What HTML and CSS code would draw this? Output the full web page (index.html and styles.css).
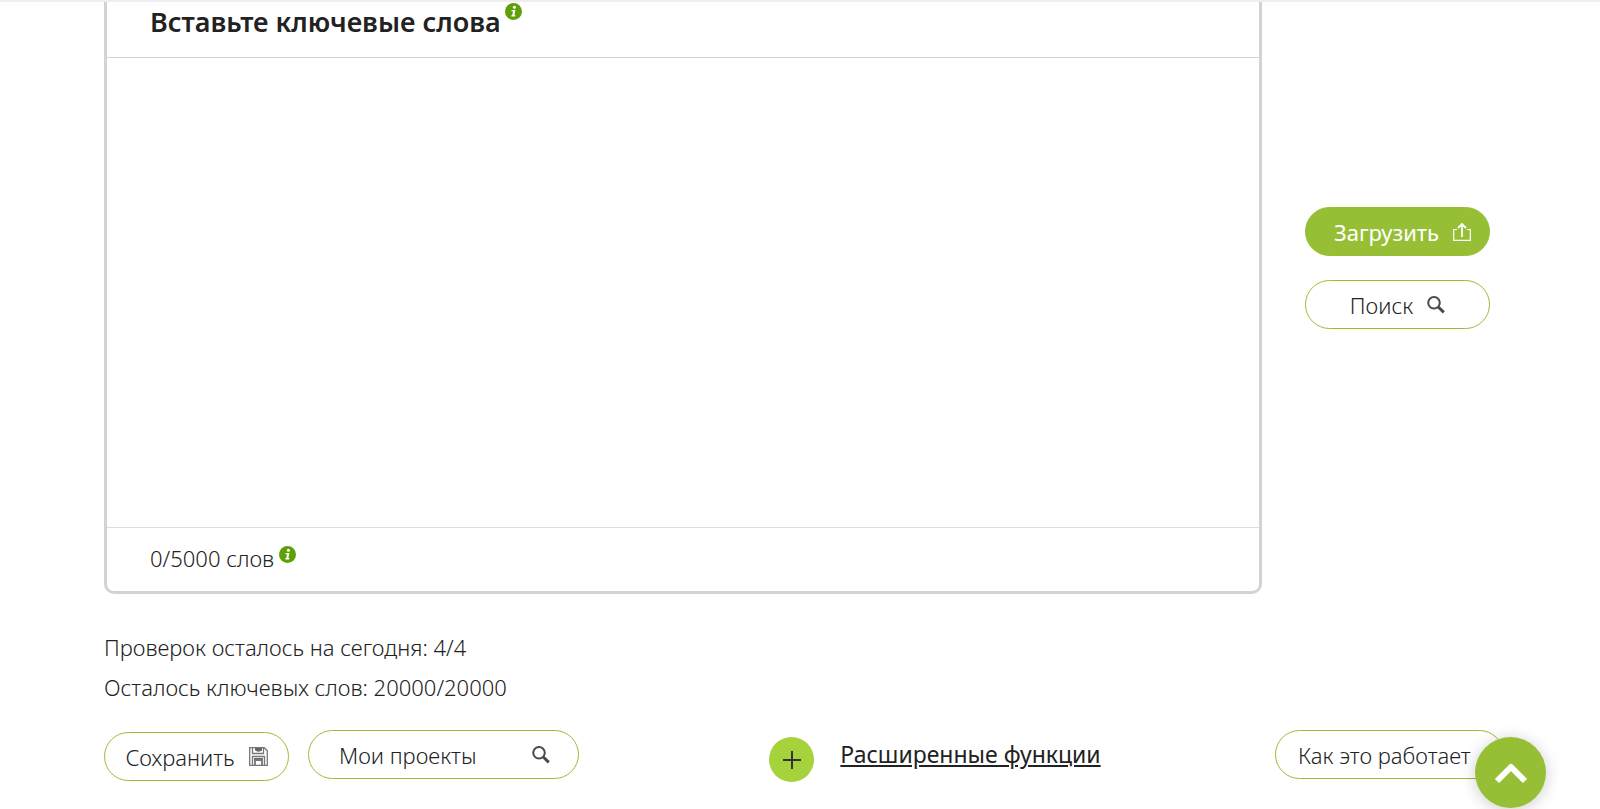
FILE: index.html
```html
<!DOCTYPE html>
<html lang="ru">
	<head>
		<meta charset="utf-8">
		<title>Ключевые слова</title>
		<link rel="stylesheet" href="styles.css">
	</head>
	<body>
		<div class="page">
			<div class="checker">
				<div class="box">
					<div class="box_head">
						<label for="keywords">Вставьте ключевые слова</label>
						<svg class="info" viewBox="0 0 17 17"><circle cx="8.5" cy="8.5" r="8.5" fill="#5fa008"/><circle cx="9.4" cy="4.2" r="1.5" fill="#fff"/><path d="M6.6 7h3.8l-1 5h1l-.3 1.4H6.3l.3-1.4h.7l.7-3.7H6.4z" fill="#fff"/></svg>
					</div>
					<textarea id="keywords"></textarea>
					<div class="box_foot">
						<span>0/5000 слов</span>
						<svg class="info" viewBox="0 0 17 17"><circle cx="8.5" cy="8.5" r="8.5" fill="#5fa008"/><circle cx="9.4" cy="4.2" r="1.5" fill="#fff"/><path d="M6.6 7h3.8l-1 5h1l-.3 1.4H6.3l.3-1.4h.7l.7-3.7H6.4z" fill="#fff"/></svg>
					</div>
				</div>
				<div class="side">
					<button type="button" class="btn btn_green">Загрузить
						<svg class="icon" viewBox="0 0 18 18" fill="none" stroke="#fff" stroke-width="1.2"><path d="M4 6.5H.7v10.8h16.6V6.5H14"/><path d="M9 14V2M5 5l4-4 4 4" stroke-width="1.8"/></svg>
					</button>
					<button type="button" class="btn">Поиск
						<svg class="icon" viewBox="0 0 18 18" fill="none" stroke="#4a4a4a"><circle cx="7" cy="6.8" r="5.8" stroke-width="2"/><path d="M11.3 11l5.5 5.3" stroke-width="3"/></svg>
					</button>
				</div>
			</div>
			<div class="limits">
				<p>Проверок осталось на сегодня: 4/4</p>
				<p>Осталось ключевых слов: 20000/20000</p>
			</div>
			<div class="actions">
				<button type="button" class="btn btn_save">Сохранить
					<svg class="icon icon_save" viewBox="0 0 19 19" fill="none" stroke="#777" stroke-width="1.3"><path d="M.7.7h14.6l3 3v14.6H.7z"/><path d="M3.5 1v5.5h11V1M3.5 18V9.5h12V18"/><path d="M6 1h7v2.5c-2 1.5-5 1.5-7 0zM5 11h9v2.5H5z" fill="#666" stroke="none"/><path d="M6 18v-5h7v5" stroke-width="1.8"/></svg>
				</button>
				<button type="button" class="btn btn_projects">Мои проекты
					<svg class="icon" viewBox="0 0 18 18" fill="none" stroke="#4a4a4a"><circle cx="7" cy="6.8" r="5.8" stroke-width="2"/><path d="M11.3 11l5.5 5.3" stroke-width="3"/></svg>
				</button>
				<div class="advanced">
					<button type="button" class="plus" aria-label="Расширенные функции">
						<svg viewBox="0 0 18 18" stroke="#333" stroke-width="2"><path d="M9 0v18M0 9h18"/></svg>
					</button>
					<a href="#">Расширенные функции</a>
				</div>
				<button type="button" class="btn btn_how">Как это работает</button>
			</div>
		</div>
		<a href="#" class="to_top" aria-label="Наверх">
			<svg viewBox="0 0 34 22" fill="none" stroke="#fff" stroke-width="6" stroke-linejoin="round"><path d="M3 19L17 5l14 14"/></svg>
		</a>
	</body>
</html>
```
FILE: styles.css
```css
*{
	box-sizing:border-box;
}
body{
	margin:0;
	border-top:2px solid #eee;
	background:#fff;
	color:#222;
	font:300 22px/40px "Noto Sans","Open Sans",sans-serif;
}
.page{
	padding:0 104px;
}
.checker{
	display:flex;
	align-items:center;
	gap:43px;
}
.box{
	flex:1;
	border:3px solid #d3d3d3;
	border-top:0;
	border-radius:0 0 10px 10px;
}
.box_head,.box_foot{
	display:flex;
	align-items:flex-start;
	padding:0 43px;
}
.box_head{
	height:56px;
	gap:4px;
	border-bottom:1px solid #d3d3d3;
	font-size:27px;
	font-weight:600;
}
.box_foot{
	height:64px;
	gap:5px;
	padding-top:10px;
	border-top:1px solid #ddd;
}
.box_foot .info{
	margin-top:8px;
}
.info{
	width:17px;
	height:17px;
	margin-top:1px;
}
.box textarea{
	display:block;
	width:100%;
	height:469px;
	padding:16px 43px;
	border:0;
	outline:0;
	resize:none;
	font:inherit;
}
.side{
	display:flex;
	flex-direction:column;
	gap:24px;
	width:191px;
	padding-right:6px;
	margin-top:-60px;
}
.btn{
	display:flex;
	align-items:center;
	justify-content:center;
	gap:14px;
	height:49px;
	padding:0 22px;
	border:1px solid #97bf35;
	border-radius:25px;
	background:#fff;
	color:#222;
	font:inherit;
	white-space:nowrap;
	cursor:pointer;
}
.btn_green{
	padding:0 18px 0 28px;
	background:#97bf35;
	color:#fff;
	font-weight:400;
}
.icon{
	flex:none;
	width:18px;
	height:18px;
}
.limits{
	padding-top:33px;
}
.limits p{
	margin:0;
}
.actions{
	display:flex;
	align-items:flex-start;
	padding-top:23px;
}
.btn_save{
	width:185px;
	margin-top:2px;
}
.icon_save{
	width:19px;
	height:19px;
}
.btn_projects{
	justify-content:space-between;
	width:271px;
	margin-left:19px;
	padding:0 28px 0 30px;
}
.advanced{
	display:flex;
	gap:26px;
	margin:0 auto;
	padding:7px 0 0 16px;
}
.advanced a{
	color:#222;
	font-size:23px;
	font-weight:400;
	line-height:34px;
	text-decoration:underline;
}
.plus{
	display:flex;
	align-items:center;
	justify-content:center;
	width:45px;
	height:45px;
	padding:0;
	border:0;
	border-radius:50%;
	background:#a6d23c;
	cursor:pointer;
}
.plus svg{
	width:18px;
	height:18px;
}
.btn_how{
	justify-content:flex-start;
	width:229px;
	margin-right:-8px;
}
.to_top{
	position:fixed;
	right:54px;
	bottom:1px;
	display:flex;
	align-items:center;
	justify-content:center;
	width:71px;
	height:71px;
	border-radius:50%;
	background:#97bf35;
	box-shadow:0 2px 16px rgba(0,0,0,.2);
}
.to_top svg{
	width:34px;
	height:22px;
}
```
